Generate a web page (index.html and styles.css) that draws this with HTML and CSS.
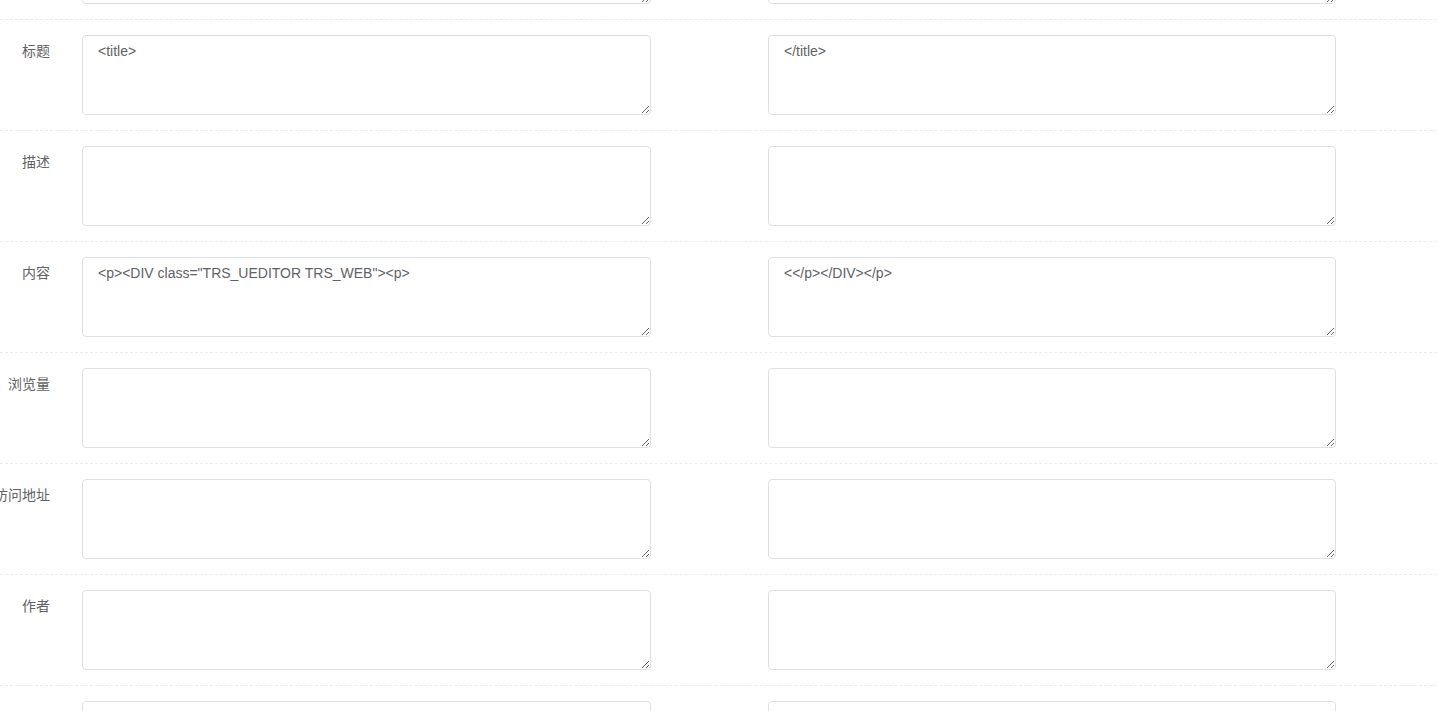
FILE: index.html
```html
<!DOCTYPE html>
<html lang="zh-CN">
<head>
    <meta charset="UTF-8">
    <title>采集规则</title>
    <link rel="stylesheet" href="styles.css">
</head>
<body>

<div class="form">
    <div class="row">
        <label class="label"></label>
        <textarea class="field"></textarea>
        <textarea class="field"></textarea>
    </div>
    <div class="row">
        <label class="label">标题</label>
        <textarea class="field">&lt;title&gt;</textarea>
        <textarea class="field">&lt;/title&gt;</textarea>
    </div>
    <div class="row">
        <label class="label">描述</label>
        <textarea class="field"></textarea>
        <textarea class="field"></textarea>
    </div>
    <div class="row">
        <label class="label">内容</label>
        <textarea class="field">&lt;p&gt;&lt;DIV class="TRS_UEDITOR TRS_WEB"&gt;&lt;p&gt;</textarea>
        <textarea class="field">&lt;&lt;/p&gt;&lt;/DIV&gt;&lt;/p&gt;</textarea>
    </div>
    <div class="row">
        <label class="label">浏览量</label>
        <textarea class="field"></textarea>
        <textarea class="field"></textarea>
    </div>
    <div class="row">
        <label class="label">访问地址</label>
        <textarea class="field"></textarea>
        <textarea class="field"></textarea>
    </div>
    <div class="row">
        <label class="label">作者</label>
        <textarea class="field"></textarea>
        <textarea class="field"></textarea>
    </div>
    <div class="row">
        <label class="label"></label>
        <textarea class="field"></textarea>
        <textarea class="field"></textarea>
    </div>
</div>

</body>
</html>
```

FILE: styles.css
```css
*{
    margin: 0;
    padding: 0;
    box-sizing: border-box;
}
body{
    font-family: "Liberation Sans", "Noto Sans CJK SC", sans-serif;
    color: #606266;
    background-color: #fff;
    overflow: hidden;
}
/* 页面已向下滚动,第一行只露出底边 */
.form{
    margin-top: -91px;
}
.row{
    display: grid;
    grid-template-columns: 50px 569px 568px;
    column-gap: 32px;
    padding: 15px 0;
    border-bottom: 1px dashed #ebebeb;
}
.row .field + .field{
    width: 568px;
    margin-left: 85px;
}
.label{
    display: flex;
    justify-content: flex-end;
    white-space: nowrap;
    font-size: 14px;
    line-height: 32px;
    color: #606266;
}
.field{
    display: block;
    width: 569px;
    height: 80px;
    padding: 6px 15px;
    border: 1px solid #dcdfe6;
    border-radius: 4px;
    font-family: "Liberation Sans", "Noto Sans CJK SC", sans-serif;
    font-size: 14px;
    line-height: 18px;
    color: #606266;
    background-color: #fff;
    outline: none;
}
```
